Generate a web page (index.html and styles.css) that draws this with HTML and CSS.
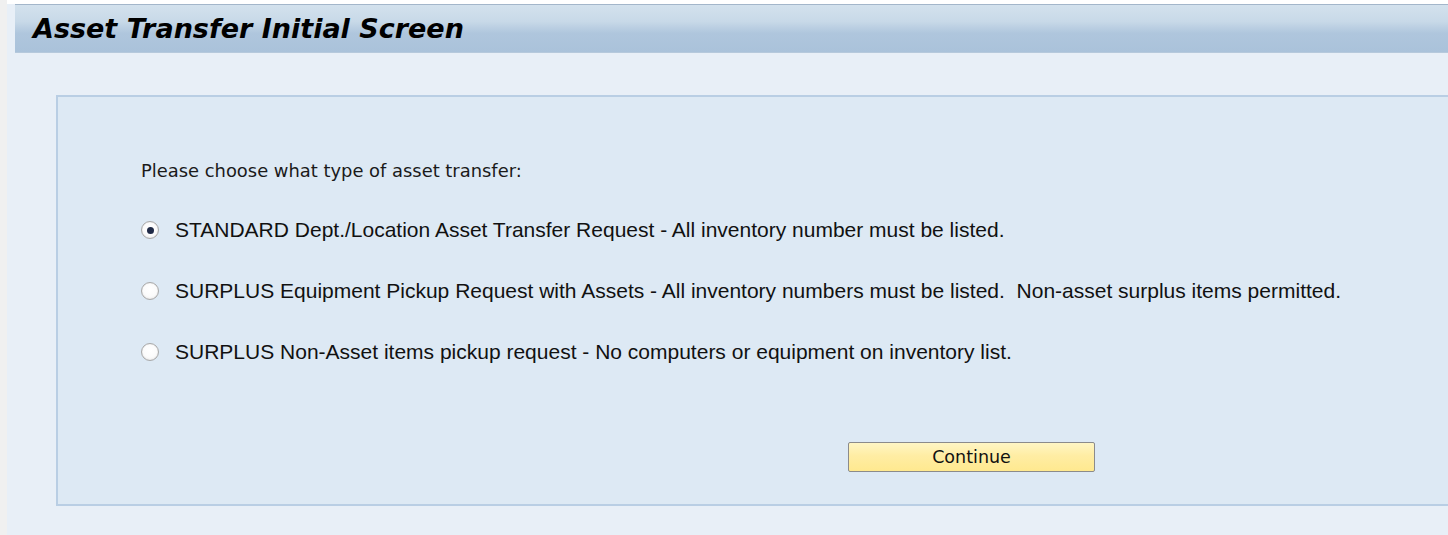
FILE: index.html
```html
<!DOCTYPE html>
<html lang="en">
<head>
<meta charset="utf-8">
<title>Asset Transfer Initial Screen</title>
<link rel="stylesheet" href="styles.css">
</head>
<body>
<div class="page">
  <header class="title-bar">
    <h1 class="title">Asset Transfer Initial Screen</h1>
  </header>
  <main class="content">
    <form class="panel">
      <p class="prompt">Please choose what type of asset transfer:</p>
      <div class="options">
        <label class="option">
          <input type="radio" name="transfer" value="standard" checked>
          <span class="radio"></span>
          <span class="option-text">STANDARD Dept./Location Asset Transfer Request - All inventory number must be listed.</span>
        </label>
        <label class="option">
          <input type="radio" name="transfer" value="surplus-assets">
          <span class="radio"></span>
          <span class="option-text">SURPLUS Equipment Pickup Request with Assets - All inventory numbers must be listed.&nbsp; Non-asset surplus items permitted.</span>
        </label>
        <label class="option">
          <input type="radio" name="transfer" value="surplus-non-asset">
          <span class="radio"></span>
          <span class="option-text">SURPLUS Non-Asset items pickup request - No computers or equipment on inventory list.</span>
        </label>
      </div>
      <div class="actions">
        <button type="button" class="btn-continue">Continue</button>
      </div>
    </form>
  </main>
</div>
</body>
</html>
```
FILE: styles.css
```css
html, body {
  margin: 0;
  padding: 0;
}

body {
  background: #f0f0f0;
  height: 535px;
  overflow: hidden;
}

.page {
  margin-left: 7px;
  border-top: 4px solid #ffffff;
  background: #e8eff7;
  height: 531px;
  display: flex;
  flex-direction: column;
}

.title-bar {
  margin-left: 8px;
  height: 47px;
  border-top: 1px solid #a3b6ca;
  border-bottom: 1px solid #b6c9dc;
  background: linear-gradient(to bottom, #d3e1ed 0%, #c8d9e8 35%, #afc6dd 60%, #aac2da 100%);
  display: flex;
  align-items: center;
}

.title {
  margin: 0 0 0 18px;
  font-family: "DejaVu Sans", sans-serif;
  font-weight: bold;
  font-style: italic;
  font-size: 27px;
  color: #000;
}

.content {
  flex: 1;
  padding: 42px 0 0 49px;
}

.panel {
  margin: 0;
  height: 407px;
  border: 2px solid #b9cee4;
  border-right: none;
  background: #dde9f4;
  padding: 0 0 0 83px;
  box-sizing: content-box;
}

.prompt {
  margin: 61px 0 0 0;
  font-family: "DejaVu Sans", sans-serif;
  font-size: 17.9px;
  line-height: 26px;
  color: #1a1a1a;
}

.options {
  margin-top: 31px;
  display: flex;
  flex-direction: column;
  gap: 31px;
}

.option {
  display: flex;
  align-items: center;
  gap: 16px;
  height: 30px;
  font-family: "Liberation Sans", Arial, sans-serif;
  font-size: 21px;
  color: #111;
}

.option input {
  position: absolute;
  opacity: 0;
  width: 0;
  height: 0;
}

.radio {
  flex: none;
  width: 16px;
  height: 16px;
  border-radius: 50%;
  border: 1px solid #a9a9a9;
  background: radial-gradient(circle at 50% 40%, #ffffff 0%, #fbfbfb 55%, #e6e6e6 100%);
  box-shadow: inset 0 0 1px #d0d0d0;
  position: relative;
}

.option input:checked + .radio::after {
  content: "";
  position: absolute;
  left: 4.5px;
  top: 4.5px;
  width: 7px;
  height: 7px;
  border-radius: 50%;
  background: #1f2a46;
}

.actions {
  margin-top: 75px;
  padding-left: 707px;
}

.btn-continue {
  width: 247px;
  height: 30px;
  border: 1px solid #8b8b8b;
  border-radius: 2px;
  background: linear-gradient(to bottom, #fff6c4 0%, #ffeda4 45%, #ffe98f 100%);
  font-family: "DejaVu Sans", sans-serif;
  font-size: 17.5px;
  color: #111;
  padding: 0;
  cursor: pointer;
}
```
